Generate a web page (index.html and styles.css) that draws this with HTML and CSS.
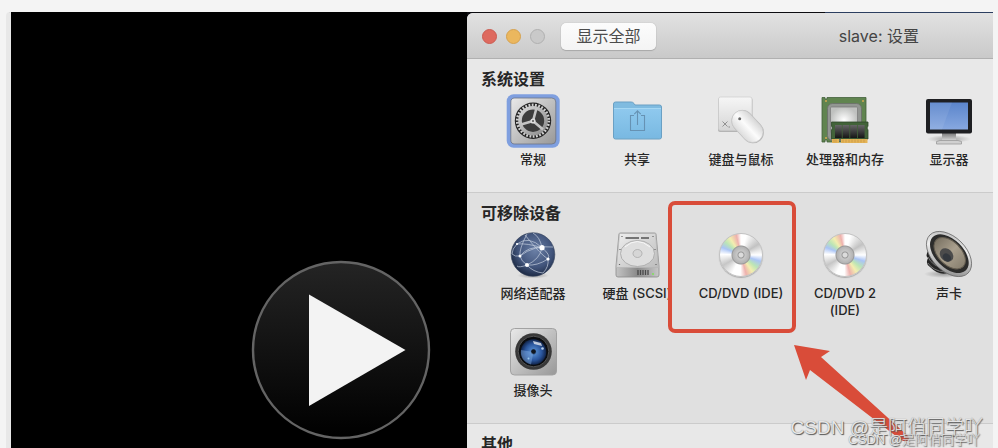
FILE: index.html
```html
<!DOCTYPE html>
<html lang="zh-CN">
<head>
<meta charset="utf-8">
<title>slave: 设置</title>
<link rel="stylesheet" href="styles.css">
</head>
<body>
<main class="stage">
  <section class="player">
    <button class="play" type="button" aria-label="播放">
      <svg viewBox="0 0 180 180" aria-hidden="true">
        <defs><linearGradient id="pl" x1="0" y1="0" x2="0" y2="1"><stop offset="0" stop-color="#242424"/><stop offset="1" stop-color="#000"/></linearGradient></defs>
        <circle cx="90" cy="90" r="88" fill="url(#pl)" stroke="#646464" stroke-width="2.4"/>
        <path d="M58 34.500L154.500 90L58 146z" fill="#f3f3f3"/>
      </svg>
    </button>
  </section>

  <div class="pane">
    <div class="window">
      <header class="titlebar">
        <div class="lights">
          <button class="light red" type="button" aria-label="关闭"></button>
          <button class="light amber" type="button" aria-label="最小化"></button>
          <button class="light idle" type="button" aria-label="缩放"></button>
        </div>
        <button class="show-all" type="button">显示全部</button>
        <h1 class="title">slave: 设置</h1>
      </header>

      <section class="group">
        <h2>系统设置</h2>
        <div class="items">
          <button class="item" type="button">
            <svg class="icon" viewBox="0 0 52 52" aria-hidden="true">
              <defs>
                <linearGradient id="tile" x1="0" y1="0" x2="1" y2="1"><stop offset="0" stop-color="#e9e9e9"/><stop offset="1" stop-color="#989898"/></linearGradient>
                <linearGradient id="metal" x1="0" y1="0" x2="1" y2="1"><stop offset="0" stop-color="#d8d8d8"/><stop offset="1" stop-color="#8c8c8c"/></linearGradient>
              </defs>
              <rect x="-.3" y="-.7" width="53" height="53.500" rx="7" fill="#7f9fdf"/>
              <rect x="3.800" y="3" width="45" height="46" rx="4" fill="url(#tile)" stroke="#6c7485" stroke-width=".8"/>
              <circle cx="26" cy="25.700" r="18.200" fill="#242424"/>
              <circle cx="26" cy="25.700" r="15.600" fill="none" stroke="#cfcfcf" stroke-width="3" stroke-dasharray="1.800 1.463"/>
              <circle cx="26" cy="25.700" r="13" fill="#3d3d3d" stroke="url(#metal)" stroke-width="3.600"/>
              <path d="M26 26L29.500 13M26 26L14 29.500M26 26L36 34.500" stroke="#c4c4c4" stroke-width="2.600"/>
              <circle cx="26" cy="26" r="2.600" fill="#ddd"/><circle cx="26" cy="26" r="1" fill="#555"/>
            </svg>
            <span>常规</span>
          </button>
          <button class="item" type="button">
            <svg class="icon" viewBox="0 0 52 52" aria-hidden="true">
              <defs><linearGradient id="fold" x1="0" y1="0" x2="0" y2="1"><stop offset="0" stop-color="#8fc9ee"/><stop offset="1" stop-color="#79b9e2"/></linearGradient></defs>
              <path d="M2.500 9Q2.500 7 4.500 7H20Q22 7 23 8.500L24 10H48.500Q50.500 10 50.500 12V42Q50.500 44 48.500 44H4.500Q2.500 44 2.500 42z" fill="#7fbbe0" stroke="#6aa0c4" stroke-width="1"/>
              <path d="M3 14.500Q3 13 4.500 13H48.500Q50 13 50 14.500V41.500Q50 43 48.500 43H4.500Q3 43 3 41.500z" fill="url(#fold)"/>
              <path d="M3 13.500H50" stroke="#a5d7f3" stroke-width="1.200"/>
              <path d="M23 20.500H19.500V35.500H33.500V20.500H30M26.500 30V16M23.300 19.200L26.500 15.800L29.700 19.200" fill="none" stroke="#6692b3" stroke-width="1.100"/>
            </svg>
            <span>共享</span>
          </button>
          <button class="item" type="button">
            <svg class="icon" viewBox="0 0 52 52" aria-hidden="true">
              <defs>
                <linearGradient id="key" x1="0" y1="0" x2="0" y2="1"><stop offset="0" stop-color="#f6f6f6"/><stop offset="1" stop-color="#d6d6d6"/></linearGradient>
                <linearGradient id="mouse" x1="0" y1="0" x2="1" y2="0"><stop offset="0" stop-color="#dcdcdc"/><stop offset=".5" stop-color="#fcfcfc"/><stop offset="1" stop-color="#d6d6d6"/></linearGradient>
              </defs>
              <rect x="3" y="3" width="34.500" height="34" rx="2" fill="#b4b4b4"/>
              <rect x="3.500" y="2" width="33.500" height="33.500" rx="2" fill="url(#key)" stroke="#ccc" stroke-width=".7"/>
              <path d="M7.500 26.500L12.500 31.500M12.500 26.500L7.500 31.500M13.500 32H15" stroke="#888" stroke-width=".9"/>
              <g transform="rotate(-43 32.500 31.500)">
                <rect x="21.500" y="13" width="22" height="37.500" rx="11" fill="#b8b8b8"/>
                <rect x="22" y="13.200" width="21" height="36.300" rx="10.500" fill="url(#mouse)" stroke="#c6c6c6" stroke-width=".6"/>
              </g>
              <circle cx="24.700" cy="23.700" r="1.500" fill="#666"/>
            </svg>
            <span>键盘与鼠标</span>
          </button>
          <button class="item" type="button">
            <svg class="icon" viewBox="0 0 52 52" aria-hidden="true">
              <defs><radialGradient id="chip"><stop offset="0" stop-color="#fff"/><stop offset="1" stop-color="#bfc1bf"/></radialGradient>
              <linearGradient id="ramc" x1="0" y1="0" x2="0" y2="1"><stop offset="0" stop-color="#666"/><stop offset="1" stop-color="#161616"/></linearGradient></defs>
              <path d="M3 2.500H6V4H8V2.500H47V47H8V45H6V47H3z" fill="#60844f" stroke="#42613b" stroke-width=".8"/>
              <rect x="8.500" y="8.500" width="34" height="37" rx="5" fill="#929692" stroke="#6d746b" stroke-width="1"/>
              <rect x="11.500" y="12" width="27" height="26" rx="1" fill="url(#chip)" stroke="#777" stroke-width=".7"/>
              <path d="M7 5v2M44 5v2M7 42v2" stroke="#d3a950" stroke-width="1.500"/>
              <path d="M12.500 27H49V31L48 33L49 35V44H12.500V35L13.500 33L12.500 31z" fill="#426339" stroke="#2e482a" stroke-width=".8"/>
              <path d="M16 30h6.800v13H16zM23.600 30h6.800v13h-6.800zM31.200 30H38v13h-6.800zM38.800 30h6.800v13h-6.800z" fill="url(#ramc)"/>
              <path d="M13 44H20V48H13zM22 44H48.500V48H22z" fill="#e4b458"/>
              <path d="M15 44.500v3M17 44.500v3M24 44.500v3M27 44.500v3M30 44.500v3M33 44.500v3M36 44.500v3M39 44.500v3M42 44.500v3M45 44.500v3" stroke="#b98635" stroke-width=".5"/>
            </svg>
            <span>处理器和内存</span>
          </button>
          <button class="item" type="button">
            <svg class="icon" viewBox="0 0 52 52" aria-hidden="true">
              <defs>
                <linearGradient id="scr" x1="0" y1="0" x2="0" y2="1"><stop offset="0" stop-color="#5b85cb"/><stop offset="1" stop-color="#87a8e0"/></linearGradient>
                <linearGradient id="stand" x1="0" y1="0" x2="0" y2="1"><stop offset="0" stop-color="#777"/><stop offset="1" stop-color="#ddd"/></linearGradient>
                <radialGradient id="soft"><stop offset="0" stop-color="#777" stop-opacity=".65"/><stop offset="1" stop-color="#777" stop-opacity="0"/></radialGradient>
              </defs>
              <ellipse cx="26" cy="44" rx="22" ry="4" fill="url(#soft)"/>
              <path d="M19 38H33V46H19z" fill="url(#stand)"/>
              <path d="M13.500 46.500L17 45.500H35L38.500 46.500V49H13.500z" fill="#d0d0d0" stroke="#999" stroke-width=".8"/>
              <rect x="3" y="4" width="46" height="34.500" rx="2" fill="#1e1f22"/>
              <rect x="7" y="7.500" width="38" height="27" fill="url(#scr)"/>
              <path d="M7 7.500H29L19 34.500H7z" fill="#fff" opacity=".08"/>
            </svg>
            <span>显示器</span>
          </button>
        </div>
      </section>

      <section class="group removable">
        <h2>可移除设备</h2>
        <div class="items">
          <button class="item" type="button">
            <svg class="icon" viewBox="0 0 52 52" aria-hidden="true">
              <defs><radialGradient id="globe" cx=".55" cy=".4" r=".65"><stop offset="0" stop-color="#6b80a6"/><stop offset=".6" stop-color="#42557c"/><stop offset="1" stop-color="#17233b"/></radialGradient></defs>
              <ellipse cx="26" cy="46.500" rx="16" ry="3" fill="url(#soft)"/>
              <circle cx="26" cy="25.500" r="21.800" fill="url(#globe)" stroke="#34415a" stroke-width=".6"/>
              <path d="M10 15Q22 6 35 18.700Q44 26 41 30M10 15Q20 14 35 18.700M13 27Q21 17 35 18.700Q33 30 20 36Q14 32 13 27Q12 20 20 5M13 27Q27 16 46 18M20 36Q30 37 41 30Q42 38 36 44M20 36Q26 43 36 44M20 36Q12 39 10 37M5 25Q8 28 13 27M35 18.700Q33 8 26 4M10 15Q5 20 5 25M18 6Q34 26 41 30" fill="none" stroke="#c6d0e0" stroke-width=".7"/>
              <g fill="#fff"><circle cx="35" cy="18.700" r="2.600"/><circle cx="41" cy="30" r="1.600"/><circle cx="13" cy="27" r="1.500"/><circle cx="20" cy="36" r="2"/><circle cx="10" cy="15" r="1.100"/></g>
            </svg>
            <span>网络适配器</span>
          </button>
          <button class="item" type="button">
            <svg class="icon" viewBox="0 0 52 52" aria-hidden="true">
              <defs><linearGradient id="hdd" x1="0" y1="0" x2="1" y2="1"><stop offset="0" stop-color="#eee"/><stop offset="1" stop-color="#bcbcbc"/></linearGradient>
              <linearGradient id="face" x1="0" y1="0" x2="1" y2="0"><stop offset="0" stop-color="#c4c4c4"/><stop offset=".5" stop-color="#898989"/><stop offset="1" stop-color="#c8c8c8"/></linearGradient></defs>
              <path d="M8 5Q8 4 9.500 4H43.500Q45 4 45 5L48 37V46Q48 48 46 48H7Q5 48 5 46V37z" fill="url(#face)" stroke="#8b8b8b" stroke-width=".8"/>
              <path d="M8.500 4.500H44.500L47.500 38.500H5.500z" fill="url(#hdd)" stroke="#b5b5b5" stroke-width=".7"/>
              <path d="M14.500 9H28M30 9H38" stroke="#747474" stroke-width="2"/>
              <ellipse cx="26.500" cy="24.500" rx="17" ry="13" fill="#dedede" stroke="#aaa" stroke-width=".9"/>
              <path d="M14 18Q26 7 39 18" fill="none" stroke="#f7f7f7" stroke-width="1"/>
              <ellipse cx="26.500" cy="24.500" rx="4.500" ry="4" fill="#d6d6d6" stroke="#aaa" stroke-width=".8"/>
              <path d="M11 7v1M42 7v1M9 20v1M44 20v1M8.500 35v1M45 35v1" stroke="#666" stroke-width="1.200"/>
              <path d="M27 41V46M29.500 41V46M32 41V46M34.500 41V46M37 41V46" stroke="#494949" stroke-width="1.300"/>
              <circle cx="42" cy="45" r="1" fill="#7ee25b"/>
            </svg>
            <span class="nowrap">硬盘 (SCSI)</span>
          </button>
          <button class="item marked" type="button">
            <i class="icon disc"></i>
            <span>CD/DVD (IDE)</span>
          </button>
          <button class="item" type="button">
            <i class="icon disc"></i>
            <span>CD/DVD 2 (IDE)</span>
          </button>
          <button class="item" type="button">
            <svg class="icon" viewBox="0 0 52 52" aria-hidden="true">
              <defs><linearGradient id="rim" x1="0" y1="0" x2="1" y2="1"><stop offset="0" stop-color="#aaa"/><stop offset=".4" stop-color="#eee"/><stop offset="1" stop-color="#777"/></linearGradient>
              <linearGradient id="cone" x1="0" y1="0" x2="1" y2="0"><stop offset="0" stop-color="#7b7364"/><stop offset=".5" stop-color="#aaa08e"/><stop offset="1" stop-color="#888070"/></linearGradient></defs>
              <ellipse cx="21" cy="45" rx="20" ry="4" fill="url(#soft)"/>
              <path d="M5 22Q2 27 5 29Q2 35 7 38Q16 47 25 44L30 38z" fill="#242424"/>
              <path d="M5 28Q9 37 22 40M5 34Q10 42 22 43" fill="none" stroke="#737373" stroke-width="1"/>
              <g transform="rotate(45 26 25)">
                <ellipse cx="26" cy="25" rx="27" ry="17" fill="url(#rim)" stroke="#696969" stroke-width=".8"/>
                <ellipse cx="26" cy="24.500" rx="23.500" ry="14" fill="#2c2c2b"/>
                <ellipse cx="26" cy="24" rx="19" ry="11.500" fill="url(#cone)" stroke="#645d50" stroke-width="1"/>
                <ellipse cx="25" cy="27.500" rx="7.500" ry="6" fill="#4b4b4b"/>
                <ellipse cx="27" cy="29" rx="4.500" ry="3.500" fill="#33383e"/>
              </g>
            </svg>
            <span>声卡</span>
          </button>
          <button class="item" type="button">
            <svg class="icon" viewBox="0 0 52 52" aria-hidden="true">
              <defs><radialGradient id="lens"><stop offset="0" stop-color="#15233a"/><stop offset=".25" stop-color="#4b7fc4"/><stop offset=".65" stop-color="#2a559c"/><stop offset="1" stop-color="#11244a"/></radialGradient></defs>
              <rect x="3.500" y="2.500" width="46" height="46.500" rx="4" fill="url(#tile)" stroke="#a2a2a2" stroke-width="1"/>
              <circle cx="26.500" cy="25.500" r="18.300" fill="#383838"/>
              <circle cx="26.500" cy="25.500" r="15.300" fill="#0b0d10" stroke="#535353" stroke-width="1"/>
              <circle cx="26.500" cy="26" r="12.800" fill="url(#lens)"/>
              <path d="M26.500 26L14 24Q13 35 24 38.500z" fill="#84b1e5" opacity=".45"/>
              <path d="M26 15L34 17L35 20L27 18z" fill="#fff" opacity=".7"/>
              <circle cx="35.500" cy="22.500" r="1.300" fill="#b7d0ef"/><circle cx="21.500" cy="32.500" r="1" fill="#9ac8ed"/>
              <circle cx="26.500" cy="25.500" r="2.300" fill="#10161f"/>
            </svg>
            <span>摄像头</span>
          </button>
        </div>
        <svg class="arrow" viewBox="0 0 120 100" aria-hidden="true">
          <path d="M0 0L36 6L27 12L114 91Q116 95 113 96Q111 97 107 95L16 25L12 35z" fill="#d94c39"/>
        </svg>
      </section>

      <section class="group other">
        <h2>其他</h2>
      </section>
    </div>
  </div>
  <div class="mark large">CSDN @是阿俏同学吖</div>
  <div class="mark small">CSDN @是阿俏同学吖</div>
</main>
</body>
</html>
```
FILE: styles.css
```css
*,
*::after {
  box-sizing: border-box;
}

body {
  margin: 0;
  padding: 12px 5px 0 6px;
  height: 100vh;
  overflow: hidden;
  background: #f4f4f4;
  color: #262626;
  font-family: Inter, "Noto Sans CJK SC", sans-serif;
}

button {
  margin: 0;
  padding: 0;
  border: 0;
  background: none;
  color: inherit;
  font: inherit;
}

h1,
h2 {
  margin: 0;
}

.stage {
  position: relative;
  display: grid;
  grid-template-columns: 456fr 526fr;
  height: 100%;
  overflow: hidden;
  border-left: 5px solid #e8e8e8;
  border-top-left-radius: 4px;
  background: #000;
}

.player {
  display: flex;
  align-items: flex-end;
  justify-content: flex-end;
  padding: 0 36px 8px 0;
}

.play {
  width: 180px;
  height: 180px;
}

.play svg {
  display: block;
}

.pane {
  min-width: 0;
  padding-top: 1px;
  overflow: hidden;
  background: linear-gradient(90deg, #0c0c10 68%, #2c3e60 68%);
}

.window {
  display: flex;
  flex-direction: column;
  min-height: 100%;
  overflow: hidden;
  border-top-left-radius: 6px;
  background: #e8e8e8;
}

.titlebar {
  display: flex;
  align-items: center;
  height: 46px;
  padding: 1px 74px 0 15px;
  border-bottom: 1px solid #b0b0b0;
  background: linear-gradient(#e2e2e2, #c9c9c9);
}

.lights {
  display: flex;
  gap: 9px;
  margin-right: 16px;
}

.light {
  width: 15px;
  height: 15px;
  border: 1px solid;
  border-radius: 50%;
}

.red {
  border-color: #cb5c52;
  background: #de6a5f;
}

.amber {
  border-color: #d5a14f;
  background: #ebb75e;
}

.idle {
  border-color: #b0b0b0;
  background: #c9c9c9;
}

.show-all {
  width: 95px;
  height: 27px;
  border-radius: 5px;
  background: linear-gradient(#fcfcfc, #f4f4f4);
  box-shadow: 0 0 1px #999, 0 1px 1px #aaa;
  color: #4c4c4c;
  font-size: 16px;
  line-height: 27px;
}

.title {
  flex: 1;
  color: #444;
  font-size: 16px;
  font-weight: 400;
  line-height: 20px;
  text-align: right;
}

.group {
  position: relative;
  padding: 10px 0 24px 14px;
  border-bottom: 1px solid #cbcbcb;
}

.group h2 {
  margin-bottom: 6px;
  font-size: 16px;
  font-weight: 700;
  line-height: 20px;
}

.removable {
  background: #e0e0e0;
}

.other {
  flex: 1;
  border-bottom: 0;
}

.items {
  display: grid;
  grid-template-columns: repeat(5, 104px);
  row-gap: 7px;
}

.item {
  position: relative;
  display: flex;
  flex-direction: column;
  align-items: center;
  gap: 4px;
  font-size: 13px;
  font-weight: 500;
  line-height: 17px;
}

.item span {
  max-width: 92px;
}

.item .nowrap {
  white-space: nowrap;
}

.icon {
  display: block;
  flex: none;
  width: 52px;
  height: 52px;
  overflow: visible;
}

.disc {
  width: 44px;
  height: 44px;
  margin: 4px;
  border: 1px solid #c2c2c2;
  border-radius: 50%;
  background:
    radial-gradient(circle, #dcdcdc 0 2px, #999 3px, #c8c8c8 4px, #b4b4b4 8px, #999 9px, transparent 10px),
    conic-gradient(#fff, #fff 15deg, #c2c2c2 58deg, #eee 80deg, #fff 90deg, #aac4f5 108deg, #bce5b5 128deg, #f3eeb0 146deg, #eeb1ad 165deg, #fff 182deg, #fff 205deg, #c6c6c6 240deg, #fff 272deg, #aac4f5 292deg, #bce5b5 310deg, #f3eeb0 327deg, #eeb1ad 347deg, #fff 360deg);
  box-shadow: 0 1px 1px #aaa;
}

.marked::after {
  content: "";
  position: absolute;
  top: -28px;
  left: -21px;
  width: 128px;
  height: 132px;
  border: 4px solid #d94c39;
  border-radius: 7px;
}

.arrow {
  position: absolute;
  top: 152px;
  left: 327px;
  z-index: 1;
  width: 120px;
  height: 100px;
}

.mark {
  position: absolute;
  z-index: 2;
  color: #e6e6e6;
  font-family: "Liberation Sans", "Noto Sans CJK SC", sans-serif;
  font-weight: 300;
  white-space: nowrap;
  text-shadow: 1px 1px 1px #555, 0 0 1px #888;
}

.large {
  right: 10px;
  bottom: 6px;
  font-size: 19px;
  line-height: 28px;
}

.small {
  right: 13px;
  bottom: -2px;
  font-size: 13px;
  line-height: 20px;
}
```
